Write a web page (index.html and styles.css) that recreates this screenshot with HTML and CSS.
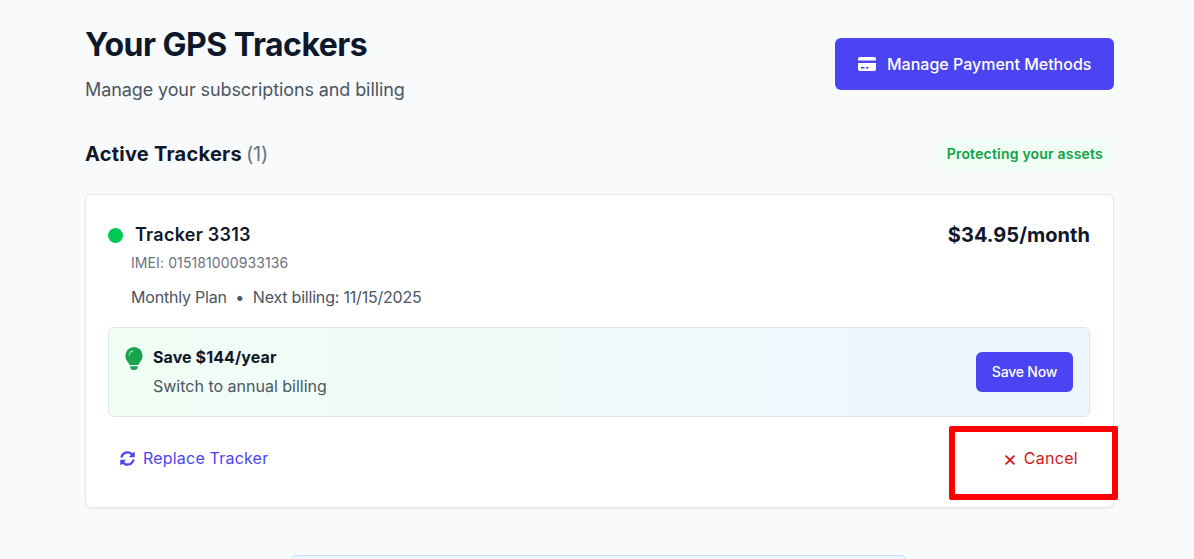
FILE: index.html
```html
<!DOCTYPE html>
<html lang="en">
<head>
<meta charset="utf-8">
<title>Your GPS Trackers</title>
<link rel="stylesheet" href="styles.css">
</head>
<body>
<main class="page">
  <header class="head">
    <div>
      <h1 class="title">Your GPS Trackers</h1>
      <p class="subtitle">Manage your subscriptions and billing</p>
    </div>
    <button class="btn-primary">
      <svg class="card-icon" viewBox="0 0 18 14" width="18" height="14" aria-hidden="true"><path fill="currentColor" d="M2 0h14a2 2 0 0 1 2 2v1.5H0V2a2 2 0 0 1 2-2zM0 6h18v6a2 2 0 0 1-2 2H2a2 2 0 0 1-2-2zm3 4v1.5h3.5V10zm5 0v1.5h2.500V10z"/></svg>
      Manage Payment Methods
    </button>
  </header>

  <section class="section-head">
    <h2 class="section-title">Active Trackers <span class="count">(1)</span></h2>
    <span class="pill">Protecting your assets</span>
  </section>

  <article class="card">
    <div class="card-top">
      <div>
        <div class="name-row"><span class="dot"></span><h3 class="name">Tracker 3313</h3></div>
        <p class="imei">IMEI: 015181000933136</p>
        <p class="plan">Monthly Plan&nbsp; •&nbsp; Next billing: 11/15/2025</p>
      </div>
      <div class="price">$34.95/month</div>
    </div>

    <div class="promo">
      <svg class="bulb" viewBox="0 0 18 24" width="18" height="23" aria-hidden="true"><path fill="currentColor" d="M9 0a9 9 0 0 1 9 9c0 3.500-2 5.500-3.500 8-.4.8-.7 1.300-1 1.800H4.500c-.3-.5-.6-1-1-1.800C2 14.500 0 12.500 0 9a9 9 0 0 1 9-9z"/><path fill="currentColor" d="M5 20h8a4 4 0 0 1-8 0z"/><path fill="none" stroke="#8ee0ae" stroke-width="1.200" stroke-linecap="round" d="M4 8.500A5 5 0 0 1 8 4"/></svg>
      <div class="promo-text">
        <div class="promo-title">Save $144/year</div>
        <div class="promo-sub">Switch to annual billing</div>
      </div>
      <button class="btn-save">Save Now</button>
    </div>

    <div class="actions">
      <a class="link-replace" href="#">
        <svg viewBox="0 0 512 512" width="15" height="15" aria-hidden="true"><path fill="currentColor" d="M370.700 133.300C339.500 104 298.900 88 255.800 88c-77.500.1-144.300 53.200-162.800 126.900-1.300 5.400-6.100 9.100-11.600 9.100H24.100c-7.500 0-13.200-6.800-11.800-14.200C33.900 94.900 134.800 8 256 8c66.400 0 126.800 26.100 171.300 68.700L463 41c15.100-15.100 41-4.400 41 17v134c0 13.300-10.700 24-24 24H346c-21.400 0-32.100-25.900-17-41zM32 296h134c21.400 0 32.100 25.900 17 41l-41.700 41.700c31.200 29.300 71.800 45.300 114.900 45.300 77.400-.1 144.300-53.100 162.800-126.800 1.300-5.400 6.100-9.100 11.600-9.100h57.300c7.500 0 13.200 6.800 11.800 14.200C478.100 417.100 377.200 504 256 504c-66.400 0-126.800-26.100-171.300-68.700L49 471c-15.100 15.100-41 4.400-41-17V320c0-13.300 10.700-24 24-24z"/></svg>
        Replace Tracker
      </a>
      <a class="link-cancel" href="#"><span class="x">×</span>Cancel</a>
    </div>
    <div class="highlight"></div>
  </article>

  <div class="notice"></div>
</main>
</body>
</html>
```

FILE: styles.css
```css
* { box-sizing: border-box; }
body {
  margin: 0;
  height: 559px;
  overflow: hidden;
  background: #f9fafb;
  color: #0f172a;
  font-family: Inter, "Liberation Sans", sans-serif;
}
.page {
  width: 1029px;
  margin-left: 85px;
}
h1, h2, h3, p { margin: 0; }
.head {
  display: flex;
  justify-content: space-between;
  align-items: flex-start;
  padding-top: 26px;
}
.title {
  font-size: 32px;
  line-height: 38px;
  font-weight: 700;
  letter-spacing: -0.5px;
}
.subtitle {
  margin-top: 13px;
  font-size: 18px;
  line-height: 26px;
  color: #4b5563;
  letter-spacing: -0.1px;
}
.btn-primary {
  display: flex;
  align-items: center;
  gap: 11px;
  width: 279px;
  height: 52px;
  margin-top: 12px;
  padding: 0 0 0 23px;
  border: 0;
  border-radius: 6px;
  background: #4b44f2;
  color: #fff;
  font: 500 16px/24px Inter, sans-serif;
  letter-spacing: 0;
  white-space: nowrap;
}
.card-icon { flex: none; }
.section-head {
  display: flex;
  justify-content: space-between;
  align-items: center;
  margin-top: 35px;
  height: 32px;
}
.section-title {
  font-size: 20px;
  line-height: 28px;
  font-weight: 700;
  letter-spacing: 0.25px;
}
.count {
  font-weight: 400;
  color: #6b7280;
  letter-spacing: -0.1px;
  margin-left: -1px;
}
.pill {
  padding: 8px 11px;
  border-radius: 16px;
  background: #f0fdf4;
  color: #0ea344;
  font-size: 14px;
  line-height: 16px;
  font-weight: 600;
  letter-spacing: 0.2px;
}
.card {
  position: relative;
  margin-top: 24px;
  height: 314px;
  padding: 24px 23px 0 22px;
  background: #fff;
  border: 1px solid #e5e7eb;
  border-radius: 6px;
  box-shadow: 0 1px 2px rgba(0, 0, 0, .05);
}
.card-top {
  display: flex;
  justify-content: space-between;
  align-items: flex-start;
}
.name-row {
  display: flex;
  align-items: center;
  gap: 12px;
  height: 32px;
}
.dot {
  width: 15px;
  height: 15px;
  border-radius: 50%;
  background: #00c853;
}
.name {
  font-size: 18px;
  line-height: 28px;
  font-weight: 600;
  letter-spacing: 0.25px;
}
.imei {
  margin: 2px 0 0 23px;
  font-size: 14px;
  line-height: 20px;
  color: #6b7280;
  letter-spacing: 0.1px;
}
.plan {
  margin: 12px 0 0 23px;
  font-size: 16px;
  line-height: 24px;
  color: #4b5563;
  letter-spacing: -0.2px;
}
.price {
  font-size: 20px;
  line-height: 32px;
  font-weight: 700;
  letter-spacing: 0.05px;
}
.promo {
  display: flex;
  align-items: center;
  height: 90px;
  margin-top: 18px;
  padding: 0 16px;
  border: 1px solid #dbe4ef;
  border-radius: 6px;
  background: linear-gradient(90deg, #f0fdf4, #eff6ff);
}
.bulb {
  flex: none;
  color: #16a34a;
  margin-top: -27px;
}
.promo-text { margin: -2px 0 0 10px; flex: 1; }
.promo-title {
  font-size: 16px;
  line-height: 24px;
  font-weight: 700;
  letter-spacing: 0.1px;
}
.promo-sub {
  margin-top: 5px;
  font-size: 16px;
  line-height: 24px;
  color: #4b5563;
  letter-spacing: 0;
}
.btn-save {
  width: 97px;
  height: 40px;
  border: 0;
  border-radius: 6px;
  background: #4b44f2;
  color: #fff;
  font: 500 14px/20px Inter, sans-serif;
  letter-spacing: -0.2px;
}
.actions {
  display: flex;
  justify-content: space-between;
  align-items: center;
  height: 40px;
  margin-top: 21px;
}
.link-replace {
  display: flex;
  align-items: center;
  gap: 8px;
  margin-left: 12px;
  color: #4b44f2;
  font-size: 16px;
  line-height: 24px;
  letter-spacing: 0.2px;
  text-decoration: none;
}
.link-cancel {
  display: flex;
  align-items: center;
  margin-right: 12px;
  color: #d01818;
  font-size: 16px;
  line-height: 24px;
  letter-spacing: 0.3px;
  text-decoration: none;
}
.x {
  width: 21px;
  font-size: 22px;
}
.highlight {
  position: absolute;
  left: 863px;
  top: 231px;
  width: 169px;
  height: 74px;
  border: 6px solid #fe0000;
  border-radius: 2px;
}
.notice {
  width: 616px;
  height: 20px;
  margin: 47px 0 0 206px;
  background: #eff6ff;
  border: 1px solid #bfdbfe;
  border-radius: 6px;
}
```
